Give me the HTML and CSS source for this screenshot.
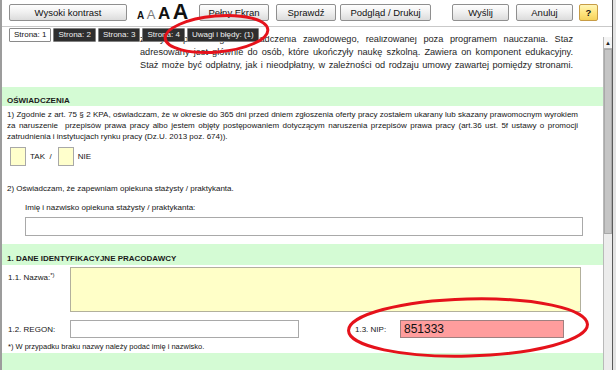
FILE: index.html
```html
<!DOCTYPE html>
<html lang="pl">
<head>
<meta charset="utf-8">
<title>Formularz</title>
<link rel="stylesheet" href="styles.css">
</head>
<body>
<div class="window">
  <div class="toolbar">
    <button class="btn btn-contrast">Wysoki kontrast</button>
    <div class="fontsizes"><span class="a1">A</span><span class="a2">A</span><span class="a3">A</span><span class="a4">A</span></div>
    <button class="btn btn-full">Pełny Ekran</button>
    <button class="btn btn-check">Sprawdź</button>
    <button class="btn btn-print">Podgląd / Drukuj</button>
    <button class="btn btn-send">Wyślij</button>
    <button class="btn btn-cancel">Anuluj</button>
    <button class="btn btn-help">?</button>
  </div>
  <div class="main">
    <div class="viewport">
      <div class="intro">
        <p>zdobycia pierwszego doświadczenia zawodowego, realizowanej poza programem nauczania. Staż</p>
        <p>adresowany jest głównie do osób, które ukończyły naukę szkolną. Zawiera on komponent edukacyjny.</p>
        <p>Staż może być odpłatny, jak i nieodpłatny, w zależności od rodzaju umowy zawartej pomiędzy stronami.</p>
      </div>
      <div class="band band-1">OŚWIADCZENIA</div>
      <p class="para">1) Zgodnie z art. 75 § 2 KPA, oświadczam, że w okresie do 365 dni przed dniem zgłoszenia oferty pracy zostałem ukarany lub skazany prawomocnym wyrokiem za naruszenie&nbsp; przepisów prawa pracy albo jestem objęty postępowaniem dotyczącym naruszenia przepisów prawa pracy (art.36 ust. 5f ustawy o promocji zatrudnienia i instytucjach rynku pracy (Dz.U. 2013 poz. 674)).</p>
      <div class="choice">
        <span class="box"></span><span class="choice-label">TAK&nbsp; /</span>
        <span class="box"></span><span class="choice-label">NIE</span>
      </div>
      <p class="line line-2">2) Oświadczam, że zapewniam opiekuna stażysty / praktykanta.</p>
      <p class="line line-sub">Imię i nazwisko opiekuna stażysty / praktykanta:</p>
      <div class="input input-guardian"></div>
      <div class="band band-2">1. DANE IDENTYFIKACYJNE PRACODAWCY</div>
      <div class="row row-name">
        <span class="label">1.1. Nazwa:<sup>*)</sup></span>
        <div class="input input-name"></div>
      </div>
      <div class="row row-ids">
        <span class="label">1.2. REGON:</span>
        <div class="input input-regon"></div>
        <span class="label label-nip">1.3. NIP:</span>
        <div class="input input-nip">851333</div>
      </div>
      <p class="footnote">*) W przypadku braku nazwy należy podać imię i nazwisko.</p>
      <div class="band band-3"></div>
    </div>
    <div class="scrollbar">
      <div class="sb-up">▲</div>
      <div class="sb-thumb"></div>
      <div class="sb-track"></div>
    </div>
  </div>
  <div class="tabs">
    <span class="tab tab-active">Strona: 1</span>
    <span class="tab">Strona: 2</span>
    <span class="tab">Strona: 3</span>
    <span class="tab">Strona: 4</span>
    <span class="tab">Uwagi i błędy: (1)</span>
  </div>
  <svg class="marks" width="616" height="370" viewBox="0 0 616 370">
    <ellipse cx="216.5" cy="34" rx="51.5" ry="18" transform="rotate(-5 216.5 34)" fill="none" stroke="#e5121b" stroke-width="3"/>
    <ellipse cx="468" cy="327.5" rx="119.5" ry="28.5" transform="rotate(-1.5 468 327.5)" fill="none" stroke="#e5121b" stroke-width="3"/>
  </svg>
</div>
</body>
</html>
```
FILE: styles.css
```css
* { box-sizing: border-box; margin: 0; padding: 0; }
html, body { width: 616px; height: 370px; overflow: hidden; background: #e4e4e4; }
body { font-family: "Liberation Sans", Arial, sans-serif; color: #151515; }

.window {
  position: relative;
  width: 613px;
  height: 370px;
  background: #fff;
  border-left: 2px solid #9c9c9c;
  border-right: 1px solid #5a5a5a;
  display: flex;
  flex-direction: column;
}

/* toolbar */
.toolbar {
  height: 27px;
  flex: none;
  display: flex;
  align-items: flex-start;
  padding: 4px 0 0 7px;
  border-bottom: 1px solid #c9c9c9;
}
.btn {
  height: 17px;
  font-family: inherit;
  font-size: 9.5px;
  line-height: 15px;
  color: #111;
  border: 1px solid #8f8f8f;
  border-radius: 2px;
  background: linear-gradient(#fefefe, #f1f1f1 45%, #dcdcdc);
  text-align: center;
  padding: 0;
}
.btn-contrast { width: 118px; }
.btn-full { width: 70px; margin-left: 12px; }
.btn-check { width: 60px; margin-left: 7px; }
.btn-print { width: 91px; margin-left: 4px; }
.btn-send { width: 57px; margin-left: 21px; }
.btn-cancel { width: 57px; margin-left: 7px; }
.btn-help {
  width: 19px;
  margin-left: 6px;
  font-weight: bold;
  background: linear-gradient(#fff6b8, #ffe680 50%, #f5d25c);
  border-color: #c79c45;
}
.fontsizes {
  width: 50px;
  margin-left: 10px;
  margin-top: -3px;
  display: flex;
  align-items: baseline;
  gap: 2.5px;
  line-height: 22px;
  color: #111;
}
.a1 { font-size: 10px; font-weight: bold; }
.a2 { font-size: 13px; color: #7a7a7a; }
.a3 { font-size: 17px; font-weight: bold; }
.a4 { font-size: 21.5px; font-weight: bold; }

/* tabs overlay */
.tabs {
  position: absolute;
  top: 28px;
  left: 7px;
  display: flex;
  gap: 2px;
}
.tab {
  height: 14px;
  padding: 0 4px;
  font-size: 8px;
  line-height: 12px;
  color: #eee;
  background: #2e2e2e;
  border: 1px solid #808080;
  border-radius: 1px;
}
.tab-active { color: #111; background: #fff; border-color: #8a8a8a; }

/* main area */
.main { flex: 1; display: flex; min-height: 0; }
.viewport {
  flex: 1;
  margin-top: 9px;
  overflow: hidden;
}
.scrollbar {
  width: 9px;
  margin-top: 10px;
  display: flex;
  flex-direction: column;
  border-left: 1px solid #b9b9b9;
  background: #ececec;
}
.sb-up {
  height: 12px;
  font-size: 6px;
  line-height: 12px;
  text-align: center;
  color: #222;
  background: #f4f4f4;
  border-bottom: 1px solid #b4b4b4;
}
.sb-thumb {
  height: 185px;
  background: #c5c5c5;
  border: 1px solid #a9a9a9;
}
.sb-track { flex: 1; }

/* content */
.intro {
  margin: -3px 0 0 138px;
  width: 433px;
  font-size: 9.2px;
  line-height: 13px;
  color: #1e1e1e;
}
.intro p { white-space: nowrap; text-align: justify; text-align-last: justify; }

.band {
  background: #d4fbd4;
  font-size: 8px;
  font-weight: bold;
  line-height: 10px;
  padding: 9px 0 0 5px;
  color: #1a1a1a;
}
.band-1 { height: 19px; margin-top: 15px; }
.band-2 { height: 21px; margin-top: 8px; padding-top: 10px; }
.band-3 { height: 20px; margin-top: 1px; }

.para {
  margin: 3px 25px 0 5px;
  font-size: 8px;
  line-height: 11px;
  text-align: justify;
}
.choice {
  display: flex;
  align-items: center;
  margin: 5px 0 0 8px;
  height: 19px;
  font-size: 8px;
}
.box {
  width: 16px;
  height: 19px;
  background: #ffffcc;
  border: 1px solid #a8a8a8;
}
.choice-label { margin: 0 6px 0 4px; }

.line { font-size: 8px; line-height: 11px; }
.line-2 { margin: 17px 0 0 5px; }
.line-sub { margin: 8px 0 0 23px; }

.input {
  height: 19px;
  border: 1px solid #a9a9a9;
  background: #fff;
}
.input-guardian { margin: 4px 20px 0 23px; }

.row { display: flex; align-items: flex-start; font-size: 8px; }
.label { width: 68px; padding-left: 6px; flex: none; }
.row-name { margin-top: 2px; }
.row-name .label { padding-top: 6px; }
.label sup { font-size: 6px; vertical-align: 3px; line-height: 0; }
.input-name { width: 511px; height: 45px; background: #ffffc8; border-color: #b2b09c; }
.row-ids { margin-top: 8px; align-items: center; height: 18px; }
.input-regon { width: 229px; height: 18px; }
.label-nip { width: 45px; margin-left: 56px; padding-left: 0; }
.input-nip {
  width: 164px;
  height: 18px;
  background: #ff9d9d;
  border-color: #a08080;
  font-size: 12px;
  line-height: 16px;
  padding-left: 3px;
  color: #111;
}
.footnote { margin: 4px 0 0 6px; font-size: 7.5px; line-height: 10px; }

.marks { position: absolute; top: 0; left: -2px; pointer-events: none; }
```
